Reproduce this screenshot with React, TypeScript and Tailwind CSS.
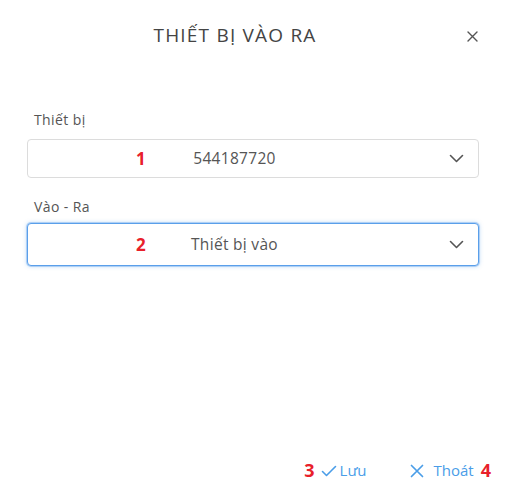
import React from 'react';

const ChevronDown = () => (
    <svg width="15" height="9" viewBox="0 0 15 9" fill="none" stroke="#555" strokeWidth="1.6" strokeLinecap="round" strokeLinejoin="round">
        <path d="M1.5 1.5 L7.5 7.5 L13.5 1.5" />
    </svg>
);

function SelectBox({ value, marker, active }: { value: string; marker: string; active?: boolean }) {
    return (
        <div
            className={`relative flex items-center rounded-[4px] bg-white pl-4 pr-[14px] ${active
                ? 'h-[43px] border border-[#5a9fea] shadow-[0_0_0_1px_rgba(120,175,240,0.45),0_0_4px_rgba(90,159,234,0.5)]'
                : 'h-[39px] border border-[#dcdcdc]'
                }`}
        >
            <span className="absolute left-[108px] top-1/2 -translate-y-1/2 text-[17px] font-bold text-[#e8202a]">{marker}</span>
            <span className="flex-1 pr-[24px] text-center text-[15.5px] tracking-[0.3px] text-[#555]">{value}</span>
            <ChevronDown />
        </div>
    );
}

export default function App() {
    return (
        <div className="flex h-[495px] w-[520px] flex-col bg-white font-['Open_Sans','Liberation_Sans',sans-serif]">
            {/* Header */}
            <div className="relative flex h-[70px] items-center justify-center pr-[50px]">
                <h2 className="text-[19px] tracking-[1.2px] text-[#444]">THIẾT BỊ VÀO RA</h2>
                <svg className="absolute right-[42px] top-[31px]" width="11" height="11" viewBox="0 0 11 11" stroke="#555" strokeWidth="1.4" strokeLinecap="round">
                    <path d="M1 1 L10 10 M10 1 L1 10" />
                </svg>
            </div>

            {/* Form */}
            <div className="flex flex-col pl-[27px] pr-[41px] pt-[39px]">
                <label className="mb-[9px] pl-[7px] text-[14px] tracking-[0.4px] text-[#555]">Thiết bị</label>
                <SelectBox value="544187720" marker="1" />
                <label className="mb-[6px] mt-[18px] pl-[7px] text-[14px] tracking-[0.4px] text-[#555]">Vào - Ra</label>
                <SelectBox value="Thiết bị vào" marker="2" active />
            </div>

            {/* Footer */}
            <div className="mt-auto flex items-center justify-end gap-[43px] pb-[11px] pr-[29px] text-[15px] text-[#4a9de8]">
                <div className="flex items-center">
                    <span className="mr-[6px] text-[18px] font-bold text-[#e8202a]">3</span>
                    <svg width="16" height="12" viewBox="0 0 16 12" fill="none" stroke="#4a9de8" strokeWidth="1.6" strokeLinecap="round" strokeLinejoin="round">
                        <path d="M1.5 6.5 L5.5 10.5 L14.5 1.5" />
                    </svg>
                    <span className="ml-[3px]">Lưu</span>
                </div>
                <div className="flex items-center">
                    <svg width="14" height="14" viewBox="0 0 14 14" stroke="#4a9de8" strokeWidth="1.7" strokeLinecap="round">
                        <path d="M1.5 1.5 L12.5 12.5 M12.5 1.5 L1.5 12.5" />
                    </svg>
                    <span className="ml-[10px]">Thoát</span>
                    <span className="ml-[7px] text-[18px] font-bold text-[#e8202a]">4</span>
                </div>
            </div>
        </div>
    );
}
